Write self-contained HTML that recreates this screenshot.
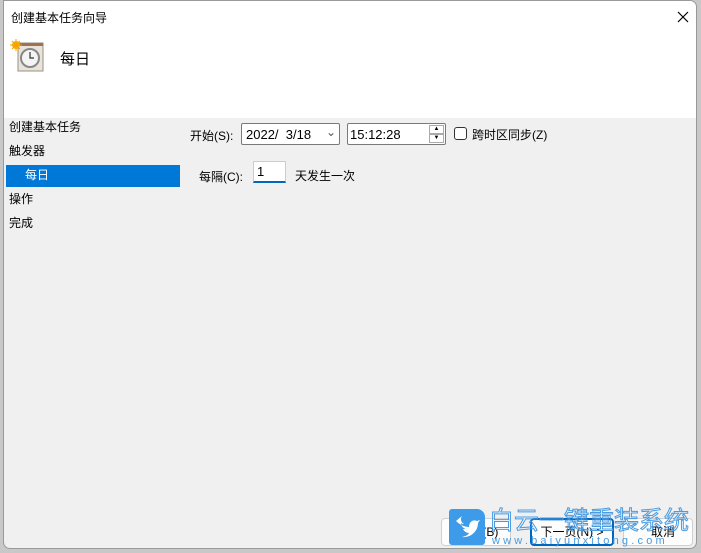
<!DOCTYPE html>
<html><head><meta charset="utf-8"><style>
*{margin:0;padding:0;box-sizing:border-box}
body{width:701px;height:553px;background:#c8c8c8;position:relative;overflow:hidden;font-family:"Liberation Sans","Noto Sans CJK SC",sans-serif;font-size:12px;color:#000}
.win{position:absolute;left:3px;top:0;width:694px;height:549px;background:#f0f0f0;border:1px solid #999;border-radius:0 7px 7px 7px;overflow:hidden}
.head{position:absolute;left:0;top:0;width:100%;height:117px;background:#fff}
.abs{position:absolute;white-space:nowrap}
.box{position:absolute;background:#fff;border:1px solid #7a7a7a;border-radius:2px}
.btn{position:absolute;top:517px;height:28px;background:#fdfdfd;border:1px solid #d0d0d0;border-radius:4px;text-align:center;line-height:26px}
</style></head><body>
<div class="win">
<div class="head"></div>
<div class="abs" style="left:7px;top:8px;font-size:12px">创建基本任务向导</div>
<svg class="abs" style="left:673px;top:10px" width="12" height="12" viewBox="0 0 12 12"><path d="M1 1l10 10M11 1L1 11" stroke="#000" stroke-width="1.2"/></svg>
<svg class="abs" style="left:6px;top:38px" width="36" height="34" viewBox="0 0 36 34">
<rect x="8" y="4" width="25" height="28" fill="#e8e4dc" stroke="#9a8f80"/>
<rect x="8" y="4" width="25" height="3" fill="#a07050"/>
<circle cx="20" cy="19" r="9" fill="#f4f4f4" stroke="#888" stroke-width="2"/>
<path d="M20 13v6h4" stroke="#333" stroke-width="1.2" fill="none"/>
<circle cx="6" cy="6" r="4" fill="#f7b500"/>
<path d="M6 0v12M0 6h12M2 2l8 8M10 2l-8 8" stroke="#f7a000" stroke-width="1"/>
</svg>
<div class="abs" style="left:56px;top:47px;font-size:15px">每日</div>
<div class="abs" style="left:5px;top:117px">创建基本任务</div>
<div class="abs" style="left:5px;top:141px">触发器</div>
<div class="abs" style="left:2px;top:164px;width:174px;height:22px;background:#0078d7"></div>
<div class="abs" style="left:21px;top:165px;color:#fff">每日</div>
<div class="abs" style="left:5px;top:189px">操作</div>
<div class="abs" style="left:5px;top:213px">完成</div>
<div class="abs" style="left:186px;top:126px">开始(S):</div>
<div class="box" style="left:237px;top:122px;width:99px;height:22px"><span class="abs" style="left:4px;top:3px;font-size:13px">2022/&nbsp;&nbsp;3/18</span><span class="abs" style="left:84px;top:1px;color:#555">⌄</span></div>
<div class="box" style="left:343px;top:122px;width:99px;height:22px"><span class="abs" style="left:2px;top:3px;font-size:13px">15:12:28</span>
<div class="abs" style="left:81px;top:1px;width:15px;height:9px;border:1px solid #aaa;font-size:6px;line-height:7px;text-align:center">▲</div>
<div class="abs" style="left:81px;top:10px;width:15px;height:9px;border:1px solid #aaa;font-size:6px;line-height:7px;text-align:center">▼</div></div>
<div class="abs" style="left:450px;top:126px;width:13px;height:13px;border:1px solid #333;border-radius:3px;background:#fff"></div>
<div class="abs" style="left:468px;top:125px">跨时区同步(Z)</div>
<div class="abs" style="left:195px;top:167px">每隔(C):</div>
<div class="abs" style="left:249px;top:160px;width:33px;height:22px;background:#fff;border:1px solid #ccc;border-bottom:2px solid #0067c0"><span class="abs" style="left:3px;top:2px;font-size:13px">1</span></div>
<div class="abs" style="left:291px;top:166px">天发生一次</div>
<div class="btn" style="left:437px;width:70px">&nbsp;&nbsp;&nbsp;&nbsp;&nbsp;步(B)</div>
<div class="btn" style="left:526px;width:84px;border:2px solid #0067c0;line-height:24px">下一页(N) &gt;</div>
<div class="btn" style="left:619px;width:70px">&nbsp;&nbsp;&nbsp;取消</div>
</div>
<div class="abs" style="left:449px;top:509px;width:36px;height:36px;background:#3d9be9;border-radius:3px 8px 3px 3px">
<svg width="36" height="36" viewBox="0 0 36 36"><path d="M7 12c4 4 9 6 13 6 0-5 4-8 8-6l3-1-2 3c0 8-7 15-16 14 4-1 6-2 7-4-3 0-5-2-6-4h3c-3-1-5-3-5-6 1 1 2 1 3 1-3-2-4-5-2-8z" fill="#fff"/></svg></div>
<div class="abs" style="left:489px;top:507px;font-size:25px;line-height:28px;color:transparent;-webkit-text-stroke:1px #4a9be0">白云一键重装系统</div>
<div class="abs" style="left:492px;top:535px;font-size:11px;color:#4a9be0;letter-spacing:3.2px">www.baiyunxitong.com</div>
</body></html>
